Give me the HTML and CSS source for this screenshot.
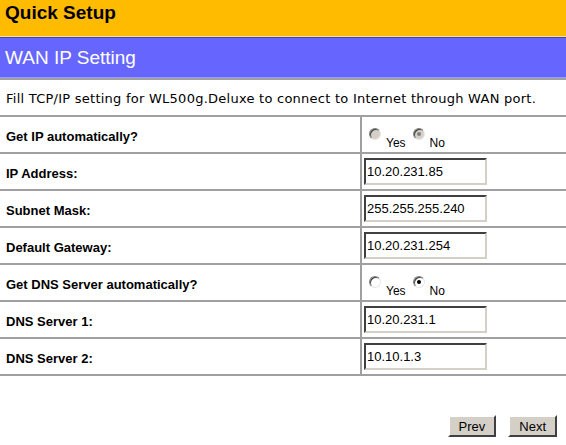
FILE: index.html
```html
<!DOCTYPE html>
<html>
<head>
<meta charset="utf-8">
<link rel="stylesheet" href="styles.css">
</head>
<body>
<div class="title">Quick Setup</div>
<div class="subtitle">WAN IP Setting</div>
<div class="desc">Fill TCP/IP setting for WL500g.Deluxe to connect to Internet through WAN port.</div>
<table class="form">
  <tr>
    <td class="label">Get IP automatically?</td>
    <td class="value">
      <span class="radios">
        <span class="radio disabled"></span><span class="rlabel">Yes</span>
        <span class="radio disabled checked"></span><span class="rlabel">No</span>
      </span>
    </td>
  </tr>
  <tr><td class="label">IP Address:</td><td class="value"><input class="field" value="10.20.231.85"></td></tr>
  <tr><td class="label">Subnet Mask:</td><td class="value"><input class="field" value="255.255.255.240"></td></tr>
  <tr><td class="label">Default Gateway:</td><td class="value"><input class="field" value="10.20.231.254"></td></tr>
  <tr>
    <td class="label">Get DNS Server automatically?</td>
    <td class="value">
      <span class="radios">
        <span class="radio"></span><span class="rlabel">Yes</span>
        <span class="radio checked"></span><span class="rlabel">No</span>
      </span>
    </td>
  </tr>
  <tr><td class="label">DNS Server 1:</td><td class="value"><input class="field" value="10.20.231.1"></td></tr>
  <tr><td class="label">DNS Server 2:</td><td class="value"><input class="field" value="10.10.1.3"></td></tr>
</table>
<div class="actions">
  <button class="btn">Prev</button>
  <button class="btn">Next</button>
</div>
</body>
</html>
```
FILE: styles.css
```css
html, body {
  margin: 0;
  padding: 0;
  background: #ffffff;
  font-family: "Liberation Sans", Arial, sans-serif;
}
.title {
  height: 37px;
  background: #ffbb00;
  border-bottom: 1px solid #ffe080;
  box-sizing: border-box;
  padding-left: 5px;
  font-size: 19px;
  font-weight: bold;
  line-height: 26px;
  color: #000;
}
.subtitle {
  height: 41px;
  background: #6666ff;
  border-top: 1px solid #4444bb;
  border-bottom: 1px solid #9999ff;
  box-sizing: border-box;
  padding-left: 5px;
  font-size: 19px;
  line-height: 40px;
  color: #fff;
}
.desc {
  border-top: 2px solid #a0a0a0;
  height: 37px;
  box-sizing: border-box;
  padding-left: 6px;
  font-family: "DejaVu Sans", Verdana, sans-serif;
  font-size: 13px;
  letter-spacing: 0.25px;
  line-height: 38px;
  color: #000;
}
.form {
  width: 100%;
  border-collapse: collapse;
}
.form td {
  border: 2px solid #a0a0a0;
  height: 35px;
  padding: 0;
  vertical-align: middle;
}
.form tr td:first-child { border-left: none; }
.form tr td:last-child { border-right: none; }
.label {
  width: 361px;
  padding: 3px 0 0 6px !important;
  box-sizing: border-box;
  font-size: 13px;
  font-weight: bold;
}
.value {
  padding-left: 1px !important;
}
.field {
  display: block;
  width: 123px;
  height: 27px;
  box-sizing: border-box;
  margin: 0 0 0 1px;
  padding: 0 1px;
  border: 2px solid;
  border-color: #404040 #d4d0c8 #d4d0c8 #404040;
  font-family: "Liberation Sans", Arial, sans-serif;
  font-size: 13px;
  color: #000;
  background: #fff;
  outline: none;
}
.radios {
  display: flex;
  align-items: flex-start;
  padding-left: 6px;
  padding-top: 8px;
}
.radio {
  flex: none;
  width: 12px;
  height: 12px;
  border-radius: 50%;
  background: #fff;
  border: 1px solid;
  border-color: #808080 #e8e8e8 #e8e8e8 #808080;
  box-shadow: inset 1px 1px 0 #404040;
  position: relative;
  box-sizing: border-box;
}
.radio.disabled { background: #d4d0c8; }
.radio.checked::after {
  content: "";
  position: absolute;
  left: 3px;
  top: 3px;
  width: 4px;
  height: 4px;
  border-radius: 50%;
  background: #000;
}
.radio.disabled.checked::after { background: #808080; }
.rlabel {
  font-size: 12px;
  margin-top: 8px;
  margin-left: 5px;
  margin-right: 7px;
}
.actions {
  display: flex;
  justify-content: flex-end;
  gap: 12px;
  padding: 39px 9px 0 0;
}
.btn {
  height: 22px;
  padding: 0 9px;
  background: #d4d0c8;
  border: 2px solid;
  border-color: #ffffff #404040 #404040 #ffffff;
  font-family: "Liberation Sans", Arial, sans-serif;
  font-size: 13px;
  color: #000;
}
```
